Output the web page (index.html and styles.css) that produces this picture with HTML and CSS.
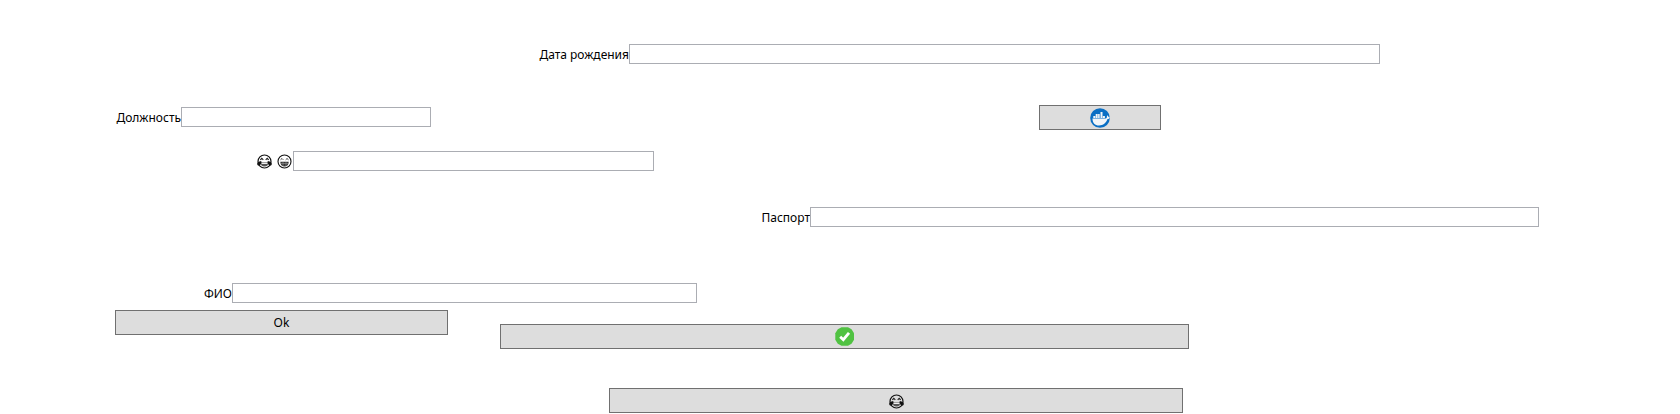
FILE: index.html
```html
<!DOCTYPE html>
<html lang="ru">
<head>
<meta charset="utf-8">
<title>Анкета</title>
<link rel="stylesheet" href="styles.css">
</head>
<body>
<svg class="symbols" aria-hidden="true">
  <symbol id="joy" viewBox="0 0 15 15">
    <circle cx="7.5" cy="7.5" r="6.5" fill="none" stroke="#111" stroke-width="1.2"/>
    <path d="M3.300 5.800 4.800 4.300 6.300 5.800M8.700 5.800 10.200 4.300 11.700 5.800" fill="none" stroke="#222" stroke-width="1.100"/>
    <path d="M3.500 8h8c0 3-1.500 4.600-4 4.600S3.500 11 3.500 8z" fill="#555"/>
    <path d="M4.500 8.500h6v1.500h-6z" fill="#eee"/>
    <path d="M4.300 7C1.500 7.300 0 8.600.2 10.200c.2 1.500 2 1.900 3 .8.900-.9 1.200-2.300 1.100-4zM10.700 7c2.800.3 4.300 1.600 4.100 3.200-.2 1.500-2 1.900-3 .8-.9-.9-1.200-2.300-1.100-4z" fill="#111"/>
  </symbol>
  <symbol id="grin" viewBox="0 0 15 15">
    <circle cx="7.5" cy="7.5" r="6.5" fill="none" stroke="#111" stroke-width="1.1"/>
    <path d="M3.500 5.800 5 4.500 6.300 5.800M8.700 5.800 10 4.500 11.500 5.800" fill="none" stroke="#333" stroke-width=".9"/>
    <path d="M3.300 7.700h8.400c0 3-1.700 4.700-4.200 4.700S3.300 10.700 3.300 7.700z" fill="#333"/>
    <path d="M4 9.500h7M6 8v4M9 8v4" stroke="#999" stroke-width=".6"/>
  </symbol>
</svg>
<form class="form">
  <div class="row row-birth">
    <label class="label" for="birth">Дата рождения</label>
    <input class="input" id="birth" type="text">
  </div>
  <div class="row row-position">
    <label class="label" for="position">Должность</label>
    <input class="input" id="position" type="text">
    <button class="button button-docker" type="button" aria-label="Docker">
      <svg class="icon" viewBox="0 0 20 20">
        <circle cx="10" cy="10" r="9.8" fill="#0b6fc4"/>
        <path d="M2.500 10.500h13.300c.8 0 1.100-.5 1-1.200-.1-.9.200-1.500.7-2.100.7.600 1 1.200 1 1.900.6-.1 1.200.1 1.300.5-.3 1-1.300 1.500-2.300 1.500-1.500 4.100-4.200 6.400-8.500 6.400-4 0-6.500-2.200-6.500-7z" fill="#f2f5f8"/>
        <path d="M3.300 8h2v2h-2zM5.700 6h2v4h-2zM8.100 6h1.600v4H8.100zM10.500 4h2v6h-2zM12.900 8h2v2h-2z" fill="#f2f5f8"/>
      </svg>
    </button>
  </div>
  <div class="row row-emoji">
    <label class="label label-emoji" for="mood">
      <svg class="emoji" role="img" aria-label="😂"><use href="#joy"/></svg>
      <svg class="emoji" role="img" aria-label="😄"><use href="#grin"/></svg>
    </label>
    <input class="input" id="mood" type="text">
  </div>
  <div class="row row-passport">
    <label class="label" for="passport">Паспорт</label>
    <input class="input" id="passport" type="text">
  </div>
  <div class="row row-name">
    <label class="label" for="name">ФИО</label>
    <input class="input" id="name" type="text">
  </div>
  <div class="row row-actions">
    <button class="button button-ok" type="button">Ok</button>
    <button class="button button-check" type="button" aria-label="Готово">
      <svg class="icon" viewBox="0 0 20 20">
        <path d="M6.500.3h6.500l3.500 2 2.500 4v6.500l-2.500 4-3.500 2H6.500l-3.700-2-2.500-4V6.300l2.500-4z" fill="#50c242"/>
        <path d="M5.200 9.700 8.300 12.700 14 5.800" fill="none" stroke="#fff" stroke-width="2.800"/>
      </svg>
    </button>
  </div>
  <div class="row row-last">
    <button class="button button-last" type="button" aria-label="😂">
      <svg class="emoji"><use href="#joy"/></svg>
    </button>
  </div>
</form>
</body>
</html>
```
FILE: styles.css
```css
* {
  box-sizing: border-box;
}

body {
  margin: 0;
  background: #fff;
  color: #000;
  font: 12px/16px "Noto Sans", "Open Sans", sans-serif;
}

.symbols {
  display: none;
}

.form {
  padding-top: 44px;
}

.row {
  display: grid;
  align-items: start;
}

.row-birth {
  grid-template-columns: 629fr 751fr 300fr;
}

.row-position {
  grid-template-columns: 181fr 250fr 608fr 122fr 519fr;
  align-items: end;
  margin-top: 41px;
}

.row-position .input,
.row-position .label {
  margin-bottom: 3px;
}

.row-emoji {
  grid-template-columns: 293fr 361fr 1026fr;
  margin-top: 21px;
}

.row-passport {
  grid-template-columns: 810fr 729fr 141fr;
  margin-top: 36px;
}

.row-name {
  grid-template-columns: 232fr 465fr 983fr;
  margin-top: 56px;
}

.row-actions {
  grid-template-columns: 115fr 333fr 52fr 689fr 491fr;
  margin-top: 7px;
}

.row-last {
  grid-template-columns: 609fr 574fr 497fr;
  margin-top: 39px;
}

.label {
  height: 20px;
  padding-top: 3px;
  text-align: right;
  white-space: nowrap;
}

.label-emoji {
  display: flex;
  justify-content: flex-end;
  gap: 5px;
  padding-right: 1px;
}

.input {
  width: 100%;
  min-width: 0;
  height: 20px;
  padding: 0 3px;
  border: 1px solid #abadb3;
  background: #fff;
  font: inherit;
}

.button {
  display: flex;
  align-items: center;
  justify-content: center;
  height: 25px;
  padding: 0;
  border: 1px solid #707070;
  background: #ddd;
  color: #000;
  font: inherit;
}

.button-docker {
  grid-column: 4;
}

.button-ok {
  grid-column: 2;
}

.button-check {
  grid-column: 4;
  margin-top: 14px;
}

.button-last {
  grid-column: 2;
  padding-top: 2px;
}

.icon {
  width: 20px;
  height: 20px;
}

.emoji {
  width: 15px;
  height: 15px;
}
```
